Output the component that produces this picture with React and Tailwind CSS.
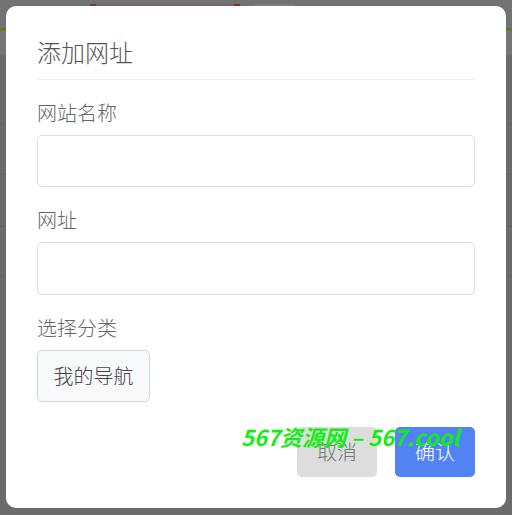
import React from 'react'

const cjk = { fontFamily: '"Noto Sans CJK SC", "Noto Sans", sans-serif' }

function Field({ label, children, gap = 'mt-[20px]' }) {
  return (
    <div className={gap}>
      <div className="text-[20px] leading-[26px] font-light text-[#666]">{label}</div>
      <div className="mt-[9px]">{children}</div>
    </div>
  )
}

export default function App() {
  return (
    <div className="relative w-[512px] h-[515px] overflow-hidden bg-[#6b6b6b]" style={cjk}>
      {/* dimmed page behind the dialog */}
      <div className="absolute inset-0 flex flex-col">
        <div className="h-[28px] bg-[#727272] flex items-center gap-[14px] pl-[90px]">
          <div className="w-[150px] h-[20px] border-x-[6px] border-[#8a3030] bg-[#7a6262]" />
          <div className="w-[40px] h-[20px] bg-[#7c7c7c]" />
          <div className="w-[200px] h-[16px] border-b-[4px] border-[#6a6f90]" />
        </div>
        <div className="h-[3px] bg-[#5b7a22]" />
        <div className="h-[24px] bg-[#767676]" />
        <div className="h-[70px] border-b border-[#5e5e5e]" />
        <div className="h-[50px] border-b border-[#5e5e5e]" />
        <div className="h-[52px] border-b border-[#5e5e5e]" />
        <div className="h-[50px] border-b border-[#5e5e5e]" />
      </div>

      <div className="relative flex pl-[6px] pt-[6px]">
        <div className="w-[500px] h-[502px] bg-white rounded-[10px] px-[31px] pt-[31px] flex flex-col">
          <div className="text-[24px] leading-[30px] font-light text-[#555] pb-[12px] border-b border-[#eee]">添加网址</div>

          <Field label="网站名称">
            <div className="h-[52px] rounded-[5px] border border-[#ddd]" />
          </Field>
          <Field label="网址" gap="mt-[20px]">
            <div className="h-[53px] rounded-[5px] border border-[#ddd]" />
          </Field>
          <Field label="选择分类" gap="mt-[20px]">
            <div className="w-[113px] h-[52px] rounded-[5px] border border-[#d3d6d9] bg-[#f8f9fa] flex items-center justify-center text-[20px] font-light text-[#444]">我的导航</div>
          </Field>

          <div className="mt-[25px] flex justify-end gap-[18px]">
            <div className="w-[80px] h-[50px] rounded-[5px] bg-[#ddd] flex items-center justify-center text-[20px] font-light text-[#777]">取消</div>
            <div className="w-[80px] h-[50px] rounded-[5px] bg-[#5382f5] flex items-center justify-center text-[20px] font-light text-white">确认</div>
          </div>
        </div>
      </div>

      <div className="absolute left-[241px] top-[421px] text-[22px] leading-[30px] italic font-semibold text-[#11ee11] whitespace-nowrap">567资源网 – 567.cool</div>
    </div>
  )
}
